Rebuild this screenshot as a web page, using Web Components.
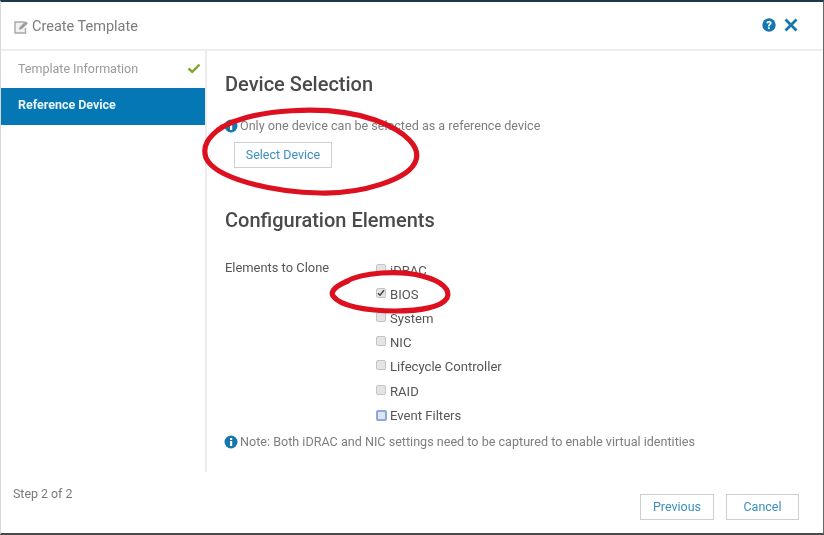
<!DOCTYPE html>
<html>
<head>
<meta charset="utf-8">
<title>Create Template</title>
<style>
  html, body { margin: 0; height: 100%; background: #fff; }
  body { font-family: Roboto, "Liberation Sans", sans-serif; overflow: hidden; }
</style>
</head>
<body>
<template id="t-dialog">
  <style>
    :host { display: flex; flex-direction: column; box-sizing: border-box; width: 824px; height: 535px; position: relative;
      background: #fff; border-top: 2px solid #1d3a4c; border-bottom: 2px solid #4a4a4a; border-left: 1px solid #d8d8d8; border-right: 1px solid #666; }
    header { flex: none; height: 49px; box-sizing: border-box; display: flex; align-items: center; justify-content: space-between;
      padding: 0 25px 2px 12px; border-bottom: 2px solid #eeeeee; filter: blur(.3px); }
    .title { display: flex; align-items: center; gap: 3px; padding-top: 4px; font-size: 14.5px; color: #7d7d7d; }
    .tools { display: flex; align-items: center; gap: 8px; }
    .body { flex: none; height: 421px; display: flex; filter: blur(.3px); }
    aside { flex: none; width: 204px; }
    main { flex: 1; border-left: 2px solid #ececec; padding: 0 0 0 18px; min-width: 0; }
    footer { flex: 1; display: flex; justify-content: space-between; padding: 14px 24px 0 12px; filter: blur(.3px); }
    .buttons { display: flex; gap: 12px; padding-top: 8px; }
    svg { display: block; }
  </style>
  <header>
    <div class="title">
      <svg width="16" height="16" viewBox="0 0 16 16" fill="none">
        <path d="M11.5 3H2v11h10.5V9" fill="#f1f1f1" stroke="#a8a8a8" stroke-width="1.4"/>
        <path d="M6 10.8l.7-2.9 6-5.7 2.1 2.2-6 5.6z" fill="#9c9c9c"/>
      </svg>
      <span>Create Template</span>
    </div>
    <div class="tools">
      <svg width="14" height="14" viewBox="0 0 14 14">
        <circle cx="7" cy="7" r="6.7" fill="#1478ae"/>
        <text x="7" y="11" text-anchor="middle" font-family="Roboto, sans-serif" font-size="11" font-weight="900" fill="#fff">?</text>
      </svg>
      <svg width="14" height="14" viewBox="0 0 14 14">
        <path d="M1.5 1.5l11 11M12.5 1.5l-11 11" stroke="#1478ae" stroke-width="2.8"/>
      </svg>
    </div>
  </header>
  <div class="body">
    <aside><slot name="nav"></slot></aside>
    <main><slot></slot></main>
  </div>
  <footer>
    <slot name="step"></slot>
    <div class="buttons"><slot name="actions"></slot></div>
  </footer>
  <slot name="overlay"></slot>
</template>

<template id="t-nav-item">
  <style>
    :host { display: flex; align-items: center; justify-content: space-between; box-sizing: border-box; height: 37px;
      padding: 0 4px 2px 17px; font-size: 12.5px; color: #9a9a9a; }
    :host([active]) { background: #0577b5; color: #e9f4fa; font-weight: 700; letter-spacing: -.02px; padding-bottom: 4px; }
    svg { display: none; }
    :host([done]) svg { display: block; }
  </style>
  <slot></slot>
  <svg width="14" height="11" viewBox="0 0 14 11"><path d="M1.5 5.5l3.7 3.4 7.3-7.2" fill="none" stroke="#7ca82b" stroke-width="2.4"/></svg>
</template>

<template id="t-heading">
  <style>
    :host { display: block; font-size: 20px; font-weight: 500; color: #4a4a4a; line-height: 24px; }
  </style>
  <slot></slot>
</template>

<template id="t-info">
  <style>
    :host { display: flex; align-items: center; gap: 2px; font-size: 12.6px; color: #7e7e7e; line-height: 14px; }
    svg { flex: none; }
  </style>
  <svg width="14" height="14" viewBox="0 0 14 14">
    <circle cx="7" cy="7" r="6.5" fill="#1478ae"/>
    <rect x="6" y="6" width="2.2" height="5" fill="#fff"/><rect x="6" y="3" width="2.2" height="2" fill="#fff"/>
  </svg>
  <span><slot></slot></span>
</template>

<template id="t-btn">
  <style>
    :host { display: inline-flex; align-items: center; justify-content: center; box-sizing: border-box; height: 26px; padding-bottom: 1px;
      border: 1px solid #cfcfcf; background: #fff; color: #3b8fc0; font-size: 12.5px; }
  </style>
  <slot></slot>
</template>

<template id="t-check">
  <style>
    :host { display: flex; align-items: center; gap: 4px; height: 24.2px; font-size: 13.1px; color: #555; }
    .box { box-sizing: border-box; width: 10px; height: 10px; margin-top: -3px; border: 1px solid #c4c4c4; border-radius: 2px; background: #e4e4e4; display: flex; }
    :host([focus]) { gap: 3px; }
    :host([focus]) .box { width: 11px; height: 11px; margin-top: 0; background: #dfe6f2; border: 2px solid #8aa9d8; }
    svg { display: none; }
    :host([checked]) svg { display: block; }
  </style>
  <div class="box">
    <svg width="8" height="8" viewBox="0 0 8 8"><path d="M1 4.2l2 2 4-5" fill="none" stroke="#444" stroke-width="1.5"/></svg>
  </div>
  <span><slot></slot></span>
</template>

<template id="t-marks">
  <style>
    :host { position: absolute; left: -1px; top: -2px; width: 824px; height: 535px; pointer-events: none; }
    svg { display: block; }
  </style>
  <svg width="824" height="535" viewBox="0 0 824 535" fill="none" stroke="#dd1020" stroke-linecap="round">
    <path d="M218 130C250 108 330 104 375 120C408 132 420 148 416 160C410 180 360 194 320 193C270 192 215 178 206 158C202 146 208 137 222 127" stroke-width="5.2"/>
    <path d="M345 282C362 272 400 270 422 276C442 281 451 290 447 298C442 307 420 311 396 311C366 311 340 306 333 296C330 291 336 286 348 281" stroke-width="5.2"/>
  </svg>
</template>

<template id="t-form-row">
  <style>
    :host { display: flex; }
    .label { flex: none; width: 151px; font-size: 12.9px; font-weight: 400; color: #555; padding-top: 2px; }
    .items { flex: 1; }
  </style>
  <div class="label"><slot name="label"></slot></div>
  <div class="items"><slot></slot></div>
</template>

<x-dialog>
  <x-nav-item slot="nav" done>Template Information</x-nav-item>
  <x-nav-item slot="nav" active>Reference Device</x-nav-item>

  <x-heading style="margin-top:21px">Device Selection</x-heading>
  <x-info style="margin-top:23px;margin-left:-1px">Only one device can be selected as a reference device</x-info>
  <x-btn style="width:98px;margin-top:9px;margin-left:9px">Select Device</x-btn>
  <x-heading style="margin-top:40px">Configuration Elements</x-heading>
  <x-form-row style="margin-top:26px">
    <span slot="label">Elements to Clone</span>
    <x-check>iDRAC</x-check>
    <x-check checked>BIOS</x-check>
    <x-check>System</x-check>
    <x-check>NIC</x-check>
    <x-check>Lifecycle Controller</x-check>
    <x-check>RAID</x-check>
    <x-check focus>Event Filters</x-check>
  </x-form-row>
  <x-info style="margin-top:8px;margin-left:-1px">Note: Both iDRAC and NIC settings need to be captured to enable virtual identities</x-info>

  <span slot="step" style="font-size:12.4px;color:#7a7a7a">Step 2 of 2</span>
  <x-btn slot="actions" style="width:74px">Previous</x-btn>
  <x-btn slot="actions" style="width:73px">Cancel</x-btn>

  <x-marks slot="overlay"></x-marks>
</x-dialog>

<script>
  function register(tag, id) {
    customElements.define(tag, class extends HTMLElement {
      constructor() {
        super();
        this.attachShadow({ mode: 'open' }).appendChild(document.getElementById(id).content.cloneNode(true));
      }
    });
  }
  register('x-dialog', 't-dialog');
  register('x-nav-item', 't-nav-item');
  register('x-heading', 't-heading');
  register('x-info', 't-info');
  register('x-btn', 't-btn');
  register('x-check', 't-check');
  register('x-marks', 't-marks');
  register('x-form-row', 't-form-row');
</script>
</body>
</html>
